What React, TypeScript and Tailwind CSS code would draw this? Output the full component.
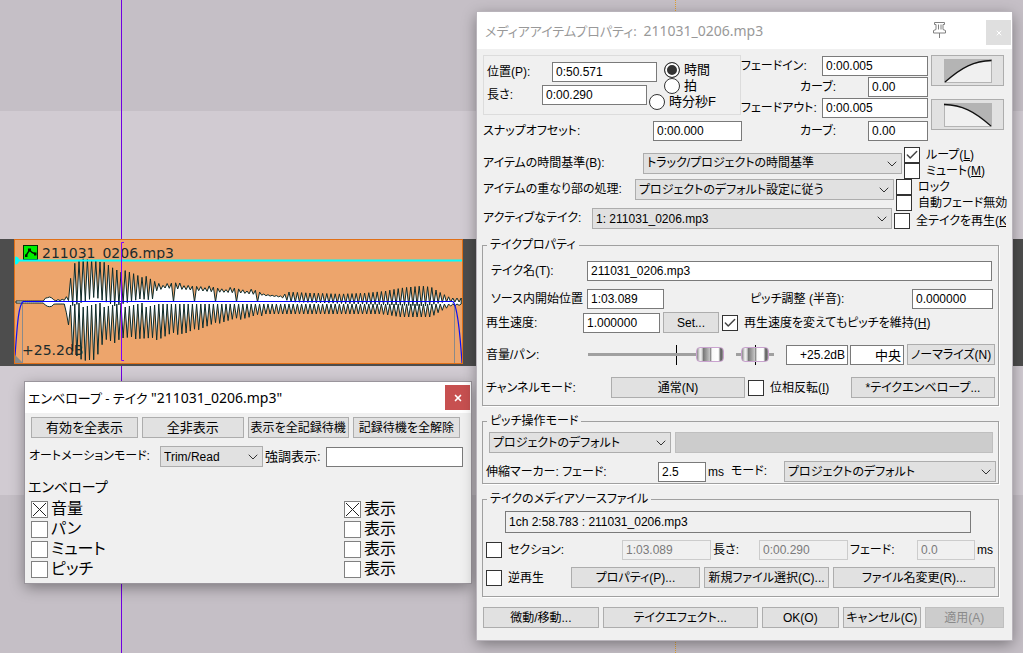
import { useId } from "react";
import type { ReactNode } from "react";
import { Check, ChevronDown, X } from "lucide-react";
import clsx from "clsx";

type Keyframe = [number, number];

// amplitude outlines of the take, in pixels from the centre line
const topPeaks: Keyframe[] = [
  [0, 1], [29, 1], [31, 5], [36, 5], [39, 2], [50, 3], [53, 8], [56, 26], [60, 40], [63, 42],
  [84, 42], [90, 38], [98, 34], [106, 31], [116, 29], [130, 25], [141, 20], [151, 17], [164, 20],
  [174, 15], [186, 16], [201, 14], [226, 13], [241, 11], [254, 7], [266, 6], [274, 10], [296, 9],
  [326, 8], [351, 9], [371, 11], [386, 14], [406, 16], [416, 15], [426, 9], [436, 4], [448, 4]
];

const topValleys: Keyframe[] = [
  [0, 1], [29, 1], [31, 4], [36, 5], [39, 1], [53, 2], [58, -4], [80, 5], [100, -4], [125, 3],
  [137, 2], [141, 11], [150, 14], [200, 10], [226, 9], [254, 6], [266, 5], [275, 0], [380, -3],
  [410, -4], [430, 0], [448, 0]
];

const bottomPeaks: Keyframe[] = [
  [0, 1], [29, 1], [31, 4], [36, 5], [39, 2], [50, 2], [54, 27], [58, 50], [68, 59], [76, 59],
  [82, 54], [86, 44], [91, 38], [98, 41], [106, 36], [121, 36], [143, 37], [156, 32], [171, 31],
  [186, 26], [206, 20], [216, 18], [236, 15], [251, 12], [276, 12], [366, 12], [386, 15],
  [416, 15], [426, 9], [436, 4], [448, 3]
];

function sample(frames: Keyframe[], x: number) {
  for (let i = 1; i < frames.length; i++) {
    const [x1, y1] = frames[i];
    const [x0, y0] = frames[i - 1];
    if (x <= x1) return y0 + ((y1 - y0) * (x - x0)) / (x1 - x0);
  }
  return frames[frames.length - 1][1];
}

function buildWave() {
  const top: string[] = [];
  const bottom: string[] = [];
  let step = 0;
  for (let x = 1; x < 448; x += 2.1) {
    const isPeak = step % 2 === 0;
    const jitter = ((step * 7) % 5) - 2;
    const loud = x > 52 && x < 250;
    let valley = sample(topValleys, x);
    if (x > 141 && x < 250 && step % 10 === 5) valley = 0;
    const up = isPeak ? sample(topPeaks, x) + (loud ? jitter * 0.6 : 0) : valley;
    const down = isPeak
      ? x < 52 ? sample(bottomPeaks, x) : x < 140 ? 3 + jitter : 2
      : sample(bottomPeaks, x) + (loud ? jitter * 0.5 : 0);
    top.push(`${x.toFixed(1)},${(62 - up).toFixed(1)}`);
    bottom.unshift(`${x.toFixed(1)},${(62 + down).toFixed(1)}`);
    step++;
  }
  return [...top, ...bottom].join(" ");
}

const wavePoints = buildWave();

const envelopes = [
  { id: "volume", label: "音量", on: true },
  { id: "pan", label: "パン", on: false },
  { id: "mute", label: "ミュート", on: false },
  { id: "pitch", label: "ピッチ", on: false }
];

function Button({ className, children, disabled }: { className?: string; children: ReactNode; disabled?: boolean }) {
  return (
    <button
      type="button"
      disabled={disabled}
      className={clsx(
        "flex h-[21px] shrink-0 items-center justify-center overflow-hidden border whitespace-nowrap",
        disabled ? "border-[#bfbfbf] bg-[#cccccc] text-[#8a8a8a]" : "border-[#adadad] bg-[#e1e1e1]",
        className
      )}
    >
      {children}
    </button>
  );
}

interface FieldProps {
  label: string;
  value: string;
  labelClass: string;
  inputClass: string;
  disabled?: boolean;
}

function Field({ label, value, labelClass, inputClass, disabled }: FieldProps) {
  const id = useId();
  return (
    <>
      <label htmlFor={id} className={clsx("shrink-0 whitespace-nowrap", labelClass)}>
        {label}
      </label>
      <input
        id={id}
        type="text"
        defaultValue={value}
        disabled={disabled}
        className={clsx(
          "h-[20px] shrink-0 border px-[3px]",
          disabled ? "border-[#cccccc] bg-[#f0f0f0] text-[#7a7a7a]" : "border-[#7a7a7a] bg-white",
          inputClass
        )}
      />
    </>
  );
}

function Select({ label, value, labelClass, selectClass }: { label: string; value: string; labelClass: string; selectClass: string }) {
  const id = useId();
  return (
    <>
      <label htmlFor={id} className={clsx("shrink-0 leading-[21px] whitespace-nowrap", labelClass)}>
        {label}
      </label>
      <div className={clsx("relative h-[21px] shrink-0", selectClass)}>
        <select id={id} className="block h-full w-full appearance-none border border-[#adadad] bg-[#e1e1e1] pr-4 pl-[3px]">
          <option>{value}</option>
        </select>
        <ChevronDown strokeWidth={1.5} className="pointer-events-none absolute top-[3px] right-[2px] h-4 w-4 text-[#333333]" />
      </div>
    </>
  );
}

function CheckBox({ children, checked, className }: { children: ReactNode; checked?: boolean; className?: string }) {
  return (
    <label className={clsx("flex h-4 items-center gap-[6px] whitespace-nowrap", className)}>
      <span className="relative h-4 w-4 shrink-0">
        <input type="checkbox" defaultChecked={checked} className="block h-4 w-4 appearance-none border border-[#333333] bg-white" />
        {checked && <Check strokeWidth={2.5} className="pointer-events-none absolute top-px left-px h-[14px] w-[14px] text-[#444444]" />}
      </span>
      <span>{children}</span>
    </label>
  );
}

function CrossBox({ label, checked, className }: { label: string; checked: boolean; className?: string }) {
  return (
    <label className={clsx("flex h-5 items-center gap-[3px] text-[16px] whitespace-nowrap", className)}>
      <span className="relative h-[17px] w-[17px] shrink-0">
        <input type="checkbox" defaultChecked={checked} className="block h-[17px] w-[17px] appearance-none border border-[#808080] bg-white" />
        {checked && (
          <svg viewBox="0 0 17 17" className="pointer-events-none absolute inset-0 h-full w-full">
            <path d="M2 2 15 15M15 2 2 15" stroke="#222" strokeWidth="1" fill="none" />
          </svg>
        )}
      </span>
      {label}
    </label>
  );
}

function Radio({ label, checked, className }: { label: string; checked?: boolean; className?: string }) {
  return (
    <label className={clsx("flex h-4 items-center gap-1 text-[13px] whitespace-nowrap", className)}>
      <input
        type="radio"
        name="timeUnit"
        defaultChecked={checked}
        className="h-4 w-4 shrink-0 appearance-none rounded-full border border-[#333333] bg-white checked:bg-[#333333] checked:shadow-[inset_0_0_0_2px_#fff]"
      />
      {label}
    </label>
  );
}

function Slider({ label, value, className, tickClass }: { label: string; value: number; className: string; tickClass: string }) {
  return (
    <div className={clsx("relative flex h-5 shrink-0 items-center", className)}>
      <span className={clsx("absolute top-0 h-5 w-px bg-black", tickClass)} />
      <input
        type="range"
        aria-label={label}
        defaultValue={value}
        className="relative h-[3px] w-full appearance-none bg-[#a0a0a0] [&::-webkit-slider-thumb]:h-[15px] [&::-webkit-slider-thumb]:w-[28px] [&::-webkit-slider-thumb]:appearance-none [&::-webkit-slider-thumb]:rounded-[4px] [&::-webkit-slider-thumb]:border [&::-webkit-slider-thumb]:border-[#c9a3cf] [&::-webkit-slider-thumb]:bg-[linear-gradient(90deg,#8a8a8a_0%,#f4f4f4_12%,#d0d0d0_20%,#777777_24%,#a8a8a8_40%,#c8c8c8_50%,#8a8a8a_52%,#f8f8f8_58%,#ffffff_82%,#555555_92%,#999999_100%)]"
      />
    </div>
  );
}

function Group({ title, children, className }: { title: string; children: ReactNode; className?: string }) {
  return (
    <fieldset className={clsx("mr-[13px] -ml-px min-w-0 border border-[#a0a0a0] pl-[3px] shadow-[1px_1px_0_#fff]", className)}>
      <legend className="ml-px h-[14px] px-[3px] leading-[14px]">{title}</legend>
      {children}
    </fieldset>
  );
}

function FadeButton({ label, shade, curve }: { label: string; shade: string; curve: string }) {
  return (
    <button type="button" aria-label={label} className="flex h-[31px] w-[73px] items-center justify-center border border-[#adadad] bg-[#e1e1e1]">
      <svg width="48" height="24" viewBox="0 0 48 24">
        <rect x="0.5" y="0.5" width="47" height="23" fill="#f0f0f0" stroke="#b4b4b4" />
        <path d={shade} fill="#b4b4b4" />
        <path d={curve} fill="none" stroke="#111" strokeWidth="1.3" />
      </svg>
    </button>
  );
}

function MediaItem() {
  return (
    <div className="relative ml-[14px] flex h-[125px] w-[449px] flex-col justify-between border border-[#e07018] bg-[#eda56c] font-['DejaVu_Sans',sans-serif] text-[14px] leading-none text-[#1c2c2c]">
      <div className="flex items-center gap-1 pt-[5px] pl-2">
        <svg width="15" height="15" viewBox="0 0 15 15">
          <rect x="0.5" y="0.5" width="14" height="14" fill="#00f000" stroke="#003000" />
          <path d="M3 10.5 6.5 5 9 7.5l3.500 1.500" fill="none" stroke="#001800" strokeWidth="1.4" />
          <path d="M2 9.500h2.500v2.500H2zM5 3.500h3v3H5zM11 7.500h2.500v3H11z" fill="#001800" />
        </svg>
        <span>211031_0206.mp3</span>
      </div>
      <span className="pb-[6px] pl-[7px]">+25.2dB</span>
      <svg className="absolute inset-0 h-full w-full" viewBox="0 0 447 123">
        <path d="M7.500 62V123M439.500 62V123" stroke="#8a8a8a" />
        <polygon points={wavePoints} fill="#fff" stroke="#0c2b2b" strokeWidth="1" strokeLinejoin="round" />
        <path d="M0 20.500H447" stroke="#00ffff" strokeWidth="2" />
        <circle cx="0" cy="20.500" r="4" fill="#00ffff" />
        <path d="M8 61.500H438" stroke="#0000ff" strokeWidth="1" />
        <path d="M0 116C2 90 3 66 8 61.500M438 61.500C442 66 445 92 447 123" fill="none" stroke="#1010f0" strokeWidth="1.200" />
        <path d="M0 115 8 123H0z" fill="#8a8a8a" />
        <path d="M109 2.500h-2.500V120.500h2.500" fill="none" stroke="#7f00ff" strokeWidth="1" />
      </svg>
    </div>
  );
}

function EnvelopeWindow() {
  return (
    <section className="absolute top-[382px] left-[25px] w-[446px] bg-[#f0f0f0] pb-1 shadow-[0_0_0_1px_#9a959c,0_4px_14px_rgba(0,0,0,0.4)]">
      <header className="flex h-[31px] items-center justify-between bg-white pr-px pl-[3px] font-['Noto_Sans','Noto_Sans_CJK_JP',sans-serif] text-[14px]">
        <h2>
          <span className="text-[13px]">エンベロープ - テイク </span>"211031_0206.mp3"
        </h2>
        <button type="button" aria-label="閉じる" className="flex h-[25px] w-[25px] items-center justify-center bg-[#c75050] text-white">
          <X className="h-[10px] w-[10px]" strokeWidth={4} />
        </button>
      </header>
      <div className="flex gap-1 pt-1 pr-[11px] pl-[6px] text-[13px]">
        <Button className="flex-[107]">有効を全表示</Button>
        <Button className="flex-[101]">全非表示</Button>
        <Button className="flex-[101] text-[12px]">表示を全記録待機</Button>
        <Button className="flex-[107] text-[12px]">記録待機を全解除</Button>
      </div>
      <div className="flex items-center pt-2 pr-2 pl-1">
        <Select label="オートメーションモード:" value="Trim/Read" labelClass="w-[131px]" selectClass="w-[103px]" />
        <Field label="強調表示:" value="" labelClass="w-[63px] pl-[2px] text-[13px]" inputClass="w-[137px]" />
      </div>
      <h3 className="mt-2 pl-[3px] text-[14px] leading-6">エンベロープ</h3>
      <div className="pl-[6px]">
        {envelopes.map((env) => (
          <div key={env.id} className="flex">
            <CrossBox label={env.label} checked={env.on} className="w-[313px]" />
            <CrossBox label="表示" checked={env.on} />
          </div>
        ))}
      </div>
    </section>
  );
}

function PropertiesWindow() {
  return (
    <section className="absolute top-[12px] left-[477px] w-[535px] bg-[#f0f0f0] pb-3 shadow-[0_0_0_1px_#b9b4bb,0_4px_14px_rgba(0,0,0,0.4)]">
      <header className="flex h-[37px] items-center bg-white pr-px pl-2 font-['Noto_Sans','Noto_Sans_CJK_JP',sans-serif] text-[14px] text-[#999999]">
        <h2 className="flex-1 whitespace-pre">
          <span className="text-[13px]">メディアアイテムプロパティ:  </span>211031_0206.mp3
        </h2>
        <button type="button" aria-label="ピン留め" className="mr-[39px]">
          <svg width="15" height="17" viewBox="0 0 15 17" fill="none" stroke="#808080">
            <path d="M2.500 0.500h10v2h-1.500v5l2.500 1v2.500H1.500V8.500l2.500-1v-5H2.500zM6.500 2.500v5M9 2.500v5M7.500 11v5" />
          </svg>
        </button>
        <button type="button" aria-label="閉じる" className="mt-1 flex h-[25px] w-[25px] items-center justify-center bg-[#dfdfdf] text-white">
          <X className="h-2 w-2" strokeWidth={3} />
        </button>
      </header>

      <div className="pt-[6px] pl-[6px]">
        <div className="flex">
          <div className="w-[258px]">
            <div className="flex h-[60px] border border-[#dcdcdc] pl-[3px]">
              <div className="w-[170px] pt-[6px]">
                <div className="flex items-center">
                  <Field label="位置(P):" value="0:50.571" labelClass="w-[65px]" inputClass="w-[105px]" />
                </div>
                <div className="mt-[3px] flex items-center">
                  <Field label="長さ:" value="0:00.290" labelClass="w-[55px]" inputClass="w-[105px]" />
                </div>
              </div>
              <div className="pt-[6px]">
                <Radio label="時間" checked className="ml-[7px]" />
                <Radio label="拍" className="ml-[7px]" />
                <Radio label="時分秒F" className="-ml-2" />
              </div>
            </div>
            <div className="mt-[6px] flex items-center">
              <Field label="スナップオフセット:" value="0:00.000" labelClass="w-[170px]" inputClass="w-[89px]" />
            </div>
          </div>
          <div className="flex w-[187px] flex-col gap-px pt-px">
            <div className="flex items-center">
              <Field label="フェードイン:" value="0:00.005" labelClass="w-[81px]" inputClass="w-[106px]" />
            </div>
            <div className="flex items-center pl-[59px]">
              <Field label="カーブ:" value="0.00" labelClass="w-[68px]" inputClass="w-[60px]" />
            </div>
            <div className="flex items-center">
              <Field label="フェードアウト:" value="0:00.005" labelClass="w-[81px]" inputClass="w-[106px]" />
            </div>
            <div className="mt-[2px] flex items-center pl-[59px]">
              <Field label="カーブ:" value="0.00" labelClass="w-[68px]" inputClass="w-[60px]" />
            </div>
          </div>
          <div className="flex flex-col gap-[13px] pl-[3px]">
            <FadeButton label="フェードイン形状" shade="M0 0H48V2C30 3 18 8 1 23H0z" curve="M1 23C18 8 30 2 47.500 1.500" />
            <FadeButton label="フェードアウト形状" shade="M0 0H48V23C30 8 18 3 0 1.500z" curve="M0 1.500C18 2 30 8 47 23" />
          </div>
        </div>

        <div className="mt-[6px] flex h-8 items-center">
          <Select label="アイテムの時間基準(B):" value="トラック/プロジェクトの時間基準" labelClass="w-40" selectClass="w-[259px]" />
          <div className="ml-[2px]">
            <CheckBox checked>ループ(<u>L</u>)</CheckBox>
            <CheckBox>ミュート(<u>M</u>)</CheckBox>
          </div>
        </div>
        <div className="flex h-[29px] items-start">
          <Select label="アイテムの重なり部の処理:" value="プロジェクトのデフォルト設定に従う" labelClass="w-[152px]" selectClass="w-[259px]" />
          <div className="ml-[2px]">
            <CheckBox>ロック</CheckBox>
            <CheckBox>自動フェード無効</CheckBox>
          </div>
        </div>
        <div className="flex items-end">
          <Select label="アクティブなテイク:" value="1: 211031_0206.mp3" labelClass="w-[109px]" selectClass="w-[300px]" />
          <CheckBox className="ml-[2px] w-[112px] overflow-hidden">全テイクを再生(<u>K</u></CheckBox>
        </div>

        <Group title="テイクプロパティ" className="mt-[9px] pb-[7px]">
          <div className="mt-[9px] flex items-center pl-[5px]">
            <Field label="テイク名(T):" value="211031_0206.mp3" labelClass="w-24" inputClass="w-[405px]" />
          </div>
          <div className="mt-2 flex items-center pl-[5px]">
            <Field label="ソース内開始位置" value="1:03.089" labelClass="w-24" inputClass="w-[77px]" />
            <Field label="ピッチ調整 (半音):" value="0.000000" labelClass="w-[248px] pl-[86px]" inputClass="w-[81px]" />
          </div>
          <div className="mt-[3px] flex items-center">
            <Field label="再生速度:" value="1.000000" labelClass="w-[97px]" inputClass="w-[77px]" />
            <Button className="ml-[3px] w-[56px]">Set...</Button>
            <CheckBox checked className="ml-[3px]">再生速度を変えてもピッチを維持(<u>H</u>)</CheckBox>
          </div>
          <div className="mt-[11px] flex items-center">
            <span className="w-[102px]">音量/パン:</span>
            <Slider label="音量" value={100} className="w-[136px]" tickClass="left-[88px]" />
            <Slider label="パン" value={50} className="ml-3 w-[38px]" tickClass="left-[19px]" />
            <input aria-label="音量値" defaultValue="+25.2dB" className="ml-3 h-5 w-[62px] border border-[#7a7a7a] bg-white px-[2px] text-right" />
            <input aria-label="パン値" defaultValue="中央" className="ml-[2px] h-5 w-[54px] border border-[#7a7a7a] bg-white px-[2px] text-right text-[13px]" />
            <Button className="ml-[3px] w-[88px]">ノーマライズ(N)</Button>
          </div>
          <div className="mt-3 flex items-center">
            <span className="w-[125px]">チャンネルモード:</span>
            <Button className="w-[134px]">通常(N)</Button>
            <CheckBox className="ml-[3px] w-[103px]">位相反転(<u>I</u>)</CheckBox>
            <Button className="w-36">*テイクエンベロープ...</Button>
          </div>
        </Group>

        <Group title="ピッチ操作モード" className="mt-2 pb-px">
          <div className="mt-1 flex items-center pl-[3px]">
            <Select label="" value="プロジェクトのデフォルト" labelClass="hidden" selectClass="w-[182px]" />
            <Button disabled className="ml-1 w-[318px]">{""}</Button>
          </div>
          <div className="mt-2 flex items-center">
            <Field label="伸縮マーカー: フェード:" value="2.5" labelClass="w-[172px]" inputClass="w-12" />
            <span className="ml-[2px] w-[23px]">ms</span>
            <Select label="モード:" value="プロジェクトのデフォルト" labelClass="w-[53px]" selectClass="w-[212px]" />
          </div>
        </Group>

        <Group title="テイクのメディアソースファイル" className="mt-2 pb-2">
          <input
            aria-label="メディアソース"
            readOnly
            value="1ch 2:58.783 : 211031_0206.mp3"
            className="mt-[5px] ml-[19px] block h-[22px] w-[466px] border border-[#7a7a7a] bg-[#f0f0f0] px-[3px]"
          />
          <div className="mt-[7px] flex items-center">
            <CheckBox className="w-[94px]">セクション:</CheckBox>
            <Field disabled label="" value="1:03.089" labelClass="w-[42px]" inputClass="w-[89px]" />
            <Field disabled label="長さ:" value="0:00.290" labelClass="w-12 pl-[2px]" inputClass="w-[89px]" />
            <Field disabled label="フェード:" value="0.0" labelClass="w-[69px] pl-[2px]" inputClass="w-[58px]" />
            <span className="pl-[2px]">ms</span>
          </div>
          <div className="mt-[7px] flex items-center gap-1">
            <CheckBox className="w-[81px]">逆再生</CheckBox>
            <Button className="w-[129px]">プロパティ(P)...</Button>
            <Button className="w-[125px]">新規ファイル選択(C)...</Button>
            <Button className="w-[162px]">ファイル名変更(R)...</Button>
          </div>
        </Group>

        <div className="mt-[10px] flex gap-1 pr-2">
          <Button className="flex-[116]">微動/移動...</Button>
          <Button className="flex-[156]">テイクエフェクト...</Button>
          <Button className="flex-[77]">OK(O)</Button>
          <Button className="flex-[77]">キャンセル(C)</Button>
          <Button disabled className="flex-[79]">適用(A)</Button>
        </div>
      </div>
    </section>
  );
}

export default function App() {
  return (
    <main className="relative flex min-h-screen flex-col overflow-hidden bg-[#c5bfc6] font-['Liberation_Sans','Noto_Sans_CJK_JP',sans-serif] text-[12px] leading-[16px] text-black [font-feature-settings:'palt']">
      <div className="h-[111px]" />
      <div className="h-[128px] bg-[#d1cbd2]" />
      <div className="h-[127px] bg-[#4d4d4d]">
        <MediaItem />
      </div>
      <div className="h-[129px] bg-[#d1cbd2]" />
      <div className="absolute top-0 left-[121px] h-[239px] w-px bg-[#7000e0]" />
      <div className="absolute top-[366px] bottom-0 left-[121px] w-px bg-[#7000e0]" />
      <div className="absolute inset-y-0 left-[675px] border-l border-dotted border-[#e0a030]" />
      <EnvelopeWindow />
      <PropertiesWindow />
    </main>
  );
}
